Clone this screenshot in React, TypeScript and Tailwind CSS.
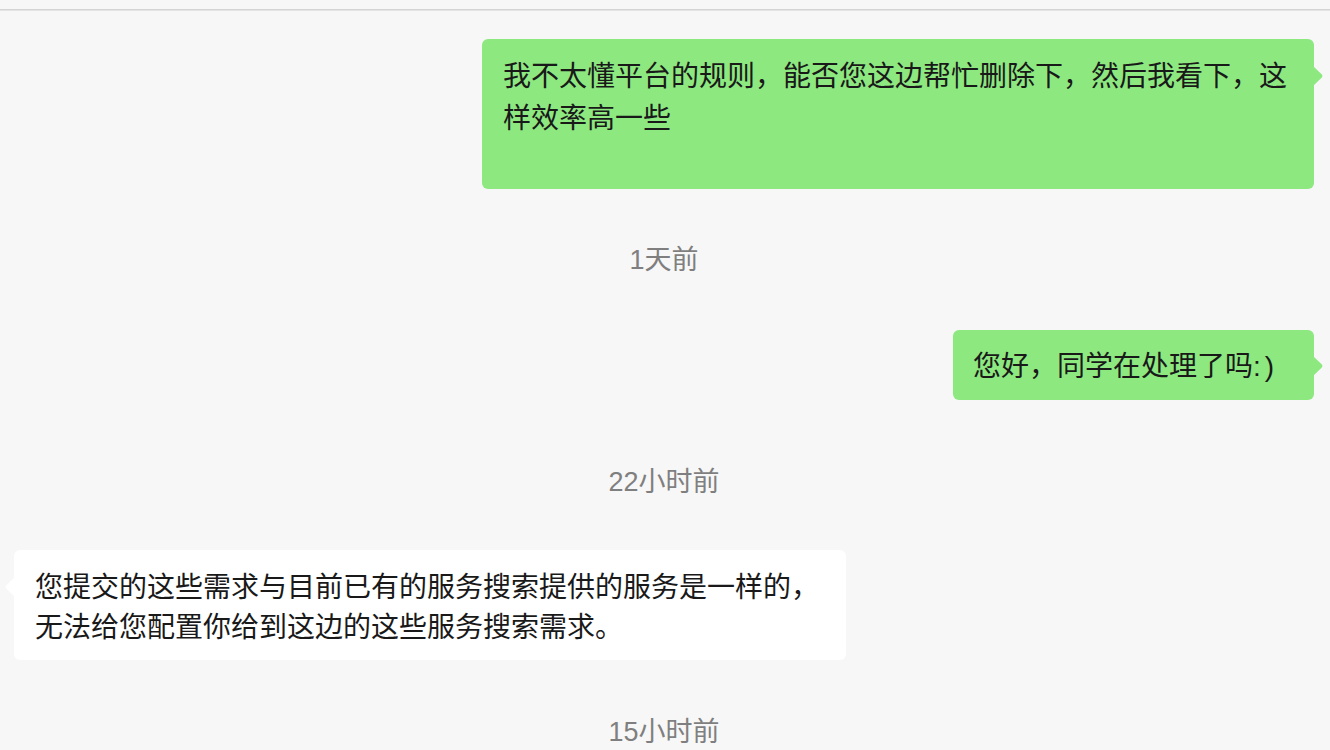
import React from "react";

function RightTail({ top }: { top: number }) {
  return (
    <svg
      className="absolute right-[-10px]"
      style={{ top }}
      width="11"
      height="20"
      viewBox="0 0 11 20"
    >
      <path d="M0 0 L8.6 8.2 Q10.4 10 8.6 11.8 L0 20 Z" fill="#8de880" />
    </svg>
  );
}

function LeftTail({ top }: { top: number }) {
  return (
    <svg
      className="absolute left-[-10px]"
      style={{ top }}
      width="11"
      height="20"
      viewBox="0 0 11 20"
    >
      <path d="M11 0 L2.4 8.2 Q0.6 10 2.4 11.8 L11 20 Z" fill="#ffffff" />
    </svg>
  );
}

function Stamp({ children, className }: { children: React.ReactNode; className: string }) {
  return (
    <div className={"text-center text-[27px] leading-[40px] text-[#7f7f7f] " + className}>
      {children}
    </div>
  );
}

export default function App() {
  return (
    <div className="h-[750px] w-[1330px] overflow-hidden bg-[#f7f7f7] font-['Liberation_Sans','Noto_Sans_CJK_SC',sans-serif]">
      <div className="pt-[9px]">
        <div className="h-px bg-[#d4d4d4]" />
        <div className="h-px bg-[#e4e4e4]" />
      </div>
      <div className="flex flex-col pl-[14px] pr-[16px]">
        <div className="relative mt-[28px] h-[150px] w-[832px] self-end rounded-[6px] bg-[#8de880] pl-[21px] pr-[10px] pt-[17px] text-[28px] leading-[42px] text-[#191919]">
          我不太懂平台的规则，能否您这边帮忙删除下，然后我看下，这
          <br />
          样效率高一些
          <RightTail top={27} />
        </div>

        <Stamp className="mt-[51px]">1天前</Stamp>

        <div className="relative mt-[50px] h-[70px] w-[361px] self-end rounded-[6px] bg-[#8de880] pl-[20px] pt-[17px] text-[28px] leading-[40px] text-[#191919]">
          您好，同学在处理了吗:<span className="ml-[4px]">)</span>
          <RightTail top={26} />
        </div>

        <Stamp className="mt-[62px]">22小时前</Stamp>

        <div className="relative mt-[48px] h-[110px] w-[832px] self-start rounded-[6px] bg-white pl-[21px] pr-[10px] pt-[18px] text-[28px] leading-[40px] text-[#191919]">
          您提交的这些需求与目前已有的服务搜索提供的服务是一样的，
          <br />
          无法给您配置你给到这边的这些服务搜索需求。
          <LeftTail top={27} />
        </div>

        <Stamp className="mt-[52px]">15小时前</Stamp>
      </div>
    </div>
  );
}
